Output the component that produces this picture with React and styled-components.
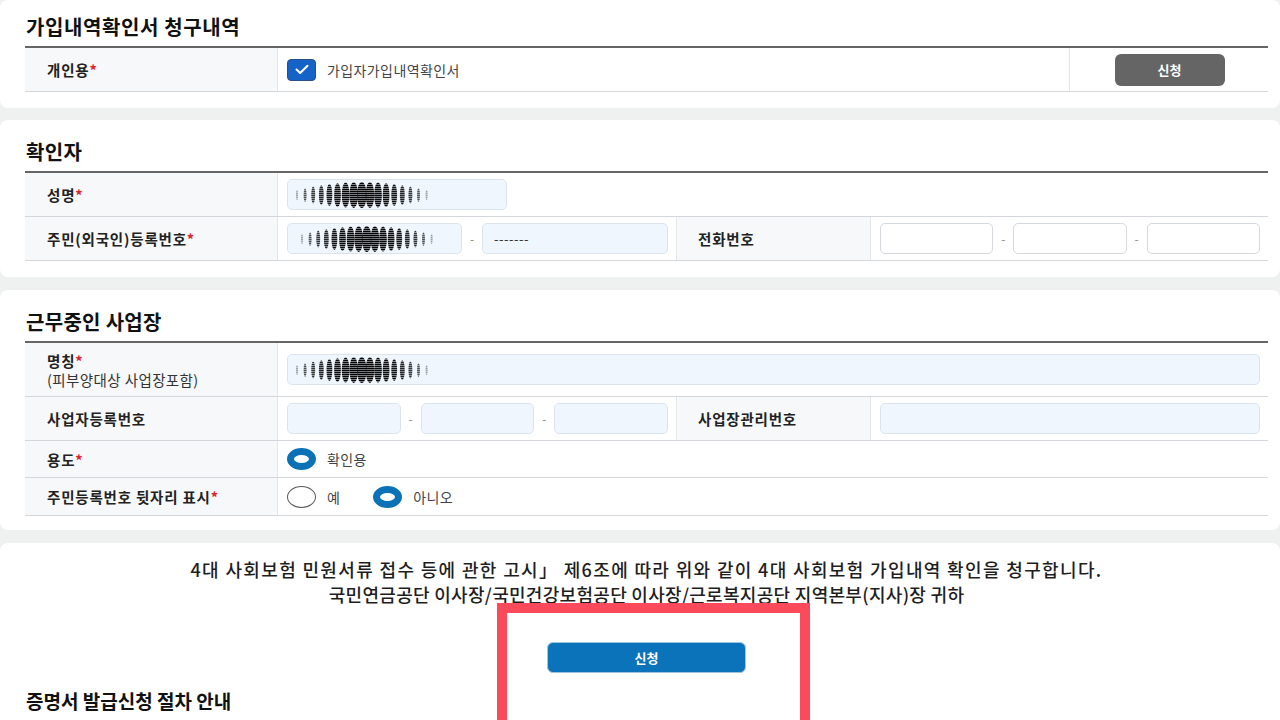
import React, { useId } from "react";
import styled, { createGlobalStyle } from "styled-components";

const GlobalStyle = createGlobalStyle`
  html, body { margin: 0; padding: 0; }
  body {
    background: #eff1f1;
    font-family: "Noto Sans CJK KR", "Noto Sans", sans-serif;
    color: #222;
  }
  * { box-sizing: border-box; }
`;

const Page = styled.div`
  width: 1280px;
  display: flex;
  flex-direction: column;
  gap: 12px;
  overflow: hidden;
  height: 720px;
`;

const Card = styled.section`
  position: relative;
  background: #fff;
  border-radius: 8px;
  padding: ${(p) => p.$top}px 12px ${(p) => p.$bottom}px 25px;
  display: flex;
  flex-direction: column;
  margin-top: ${(p) => p.$shift || 0}px;
`;

const Title = styled.h2`
  margin: 0 0 7px 1px;
  font-size: ${(p) => p.$size || 20}px;
  line-height: 24px;
  font-weight: 700;
  color: #111;
  letter-spacing: ${(p) => p.$ls ?? 0.3}px;
`;

const Table = styled.div`
  border-top: 2px solid #666;
  display: flex;
  flex-direction: column;
`;

const Row = styled.div`
  display: grid;
  grid-template-columns: ${(p) => p.$cols};
  height: ${(p) => p.$h || 44}px;
  border-bottom: 1px solid #d3d6da;
`;

const Label = styled.div`
  background: #f7f8fa;
  border-right: 1px solid #e3e5e8;
  border-left: ${(p) => (p.$inner ? "1px solid #e3e5e8" : "none")};
  padding-left: ${(p) => (p.$inner ? 21 : 22)}px;
  display: flex;
  flex-direction: column;
  justify-content: center;
  font-size: 14.5px;
  letter-spacing: 0.8px;
  font-weight: 700;
  color: #222;
  line-height: 19px;
`;

const Sub = styled.span`
  font-weight: 400;
  color: #333;
  letter-spacing: 0.4px;
`;

const Req = styled.span`
  color: #e0242c;
`;

const Cell = styled.div`
  display: flex;
  align-items: center;
  padding: 0 8px 0 9px;
  border-right: ${(p) => (p.$divider ? "1px solid #e3e5e8" : "none")};
  justify-content: ${(p) => (p.$center ? "center" : "flex-start")};
`;

const Input = styled.div`
  height: 31px;
  flex: ${(p) => (p.$w ? `0 0 ${p.$w}px` : "1 1 0")};
  border-radius: 5px;
  border: 1px solid ${(p) => (p.$white ? "#d5d9de" : "#dbe4ee")};
  background: ${(p) => (p.$white ? "#fff" : "#eff6fe")};
  display: flex;
  align-items: center;
  padding-left: ${(p) => p.$pl ?? 8}px;
  font-size: 13px;
  color: #333;
  letter-spacing: 0.5px;
`;

const Dash = styled.span`
  flex: 0 0 20px;
  text-align: center;
  color: #888;
  font-size: 12px;
`;

const CheckBox = styled.span`
  width: 29px;
  height: 22px;
  border-radius: 4px;
  background: #1663c7;
  border: 1px solid #2b4f84;
  display: inline-flex;
  align-items: center;
  justify-content: center;
  margin-right: 11px;
`;

const OptText = styled.span`
  font-size: 14px;
  letter-spacing: 0.4px;
  color: #444;
  margin-right: ${(p) => p.$mr || 0}px;
`;

const Radio = styled.span`
  width: 29px;
  height: 22px;
  border-radius: 50%;
  background: #fff;
  border: ${(p) => (p.$on ? "7px solid #0b72b8" : "1px solid #5a5a5a")};
  margin-right: 11px;
  display: inline-block;
`;

const GrayButton = styled.button`
  width: 110px;
  height: 32px;
  border: none;
  border-radius: 6px;
  background: #656565;
  color: #fff;
  font-family: inherit;
  font-size: 13px;
  font-weight: 700;
`;

const Notice = styled.p`
  margin: 0;
  text-align: center;
  font-size: 18px;
  line-height: 25px;
  font-weight: 500;
  color: #1e1e1e;
  letter-spacing: ${(p) => p.$ls || 0}px;
`;

const BlueButton = styled.button`
  align-self: center;
  width: 199px;
  height: 31px;
  margin: 35px 0 16px;
  border: 1px solid #9fc3e0;
  border-radius: 6px;
  background: #0b73b9;
  color: #fff;
  font-family: inherit;
  font-size: 13px;
  font-weight: 700;
`;

const Highlight = styled.div`
  position: absolute;
  left: 497px;
  top: 60px;
  width: 313px;
  height: 130px;
  border: 10px solid #fa4a5b;
  pointer-events: none;
`;

function Blur({ offset = 0 }) {
  const raw = useId();
  const id = "p" + raw.replace(/[^a-zA-Z0-9]/g, "");
  const cols = Array.from({ length: 17 }, (_, i) => {
    const t = (i - 8) / 8;
    const k = 1 - t * t;
    return {
      cx: 3 + i * 8.1,
      rx: 1 + 3.8 * Math.pow(1 - Math.abs(t), 1.0),
      ry: 5 + 8 * k,
      op: 0.35 + 0.65 * Math.pow(k, 0.5),
    };
  });
  return (
    <svg width="140" height="28" viewBox="0 0 140 28" style={{ marginLeft: offset }}>
      <defs>
        <pattern id={id} width="6" height="2" patternUnits="userSpaceOnUse">
          <rect width="6" height="1.5" fill="#000" />
        </pattern>
      </defs>
      {cols.map((c, i) => (
        <ellipse key={i} cx={c.cx} cy={14} rx={c.rx} ry={c.ry} fill={`url(#${id})`} opacity={c.op} />
      ))}
    </svg>
  );
}

const Check = () => (
  <svg width="14" height="11" viewBox="0 0 14 11">
    <path d="M1.5 5.5 L5.2 9 L12.5 1.8" fill="none" stroke="#fff" strokeWidth="2" strokeLinecap="round" strokeLinejoin="round" />
  </svg>
);

export default function App() {
  return (
    <>
      <GlobalStyle />
      <Page>
        <Card $top={15} $bottom={16}>
          <Title $ls={0.6}>가입내역확인서 청구내역</Title>
          <Table>
            <Row $cols="253px 1fr 198px">
              <Label>
                <span>개인용<Req>*</Req></span>
              </Label>
              <Cell $divider>
                <CheckBox><Check /></CheckBox>
                <OptText>가입자가입내역확인서</OptText>
              </Cell>
              <Cell $center>
                <GrayButton>신청</GrayButton>
              </Cell>
            </Row>
          </Table>
        </Card>

        <Card $top={20} $bottom={16}>
          <Title>확인자</Title>
          <Table>
            <Row $cols="253px 1fr">
              <Label>
                <span>성명<Req>*</Req></span>
              </Label>
              <Cell>
                <Input $w={220} $pl={0}><Blur offset={6} /></Input>
              </Cell>
            </Row>
            <Row $cols="253px 398px 195px 1fr">
              <Label>
                <span>주민(외국인)등록번호<Req>*</Req></span>
              </Label>
              <Cell>
                <Input $pl={0}><Blur offset={11} /></Input>
                <Dash>-</Dash>
                <Input $pl={11}>-------</Input>
              </Cell>
              <Label $inner>전화번호</Label>
              <Cell>
                <Input $white />
                <Dash>-</Dash>
                <Input $white />
                <Dash>-</Dash>
                <Input $white />
              </Cell>
            </Row>
          </Table>
        </Card>

        <Card $top={20} $bottom={14} $shift={1}>
          <Title>근무중인 사업장</Title>
          <Table>
            <Row $cols="253px 1fr" $h={54}>
              <Label>
                <span>명칭<Req>*</Req></span>
                <Sub>(피부양대상 사업장포함)</Sub>
              </Label>
              <Cell>
                <Input $pl={0}><Blur offset={6} /></Input>
              </Cell>
            </Row>
            <Row $cols="253px 398px 195px 1fr">
              <Label>사업자등록번호</Label>
              <Cell>
                <Input />
                <Dash>-</Dash>
                <Input />
                <Dash>-</Dash>
                <Input />
              </Cell>
              <Label $inner>사업장관리번호</Label>
              <Cell>
                <Input />
              </Cell>
            </Row>
            <Row $cols="253px 1fr" $h={37}>
              <Label>
                <span>용도<Req>*</Req></span>
              </Label>
              <Cell>
                <Radio $on />
                <OptText>확인용</OptText>
              </Cell>
            </Row>
            <Row $cols="253px 1fr" $h={38}>
              <Label>
                <span>주민등록번호 뒷자리 표시<Req>*</Req></span>
              </Label>
              <Cell>
                <Radio />
                <OptText $mr={33}>예</OptText>
                <Radio $on />
                <OptText>아니오</OptText>
              </Cell>
            </Row>
          </Table>
        </Card>

        <Card $top={14} $bottom={20} $shift={1}>
          <Notice $ls={1.35}>
            4대 사회보험 민원서류 접수 등에 관한 고시」 제6조에 따라 위와 같이 4대 사회보험 가입내역 확인을 청구합니다.
          </Notice>
          <Notice $ls={0.3}>
            국민연금공단 이사장/국민건강보험공단 이사장/근로복지공단 지역본부(지사)장 귀하
          </Notice>
          <BlueButton>신청</BlueButton>
          <Title $size={19} $ls={0}>증명서 발급신청 절차 안내</Title>
          <Highlight />
        </Card>
      </Page>
    </>
  );
}
